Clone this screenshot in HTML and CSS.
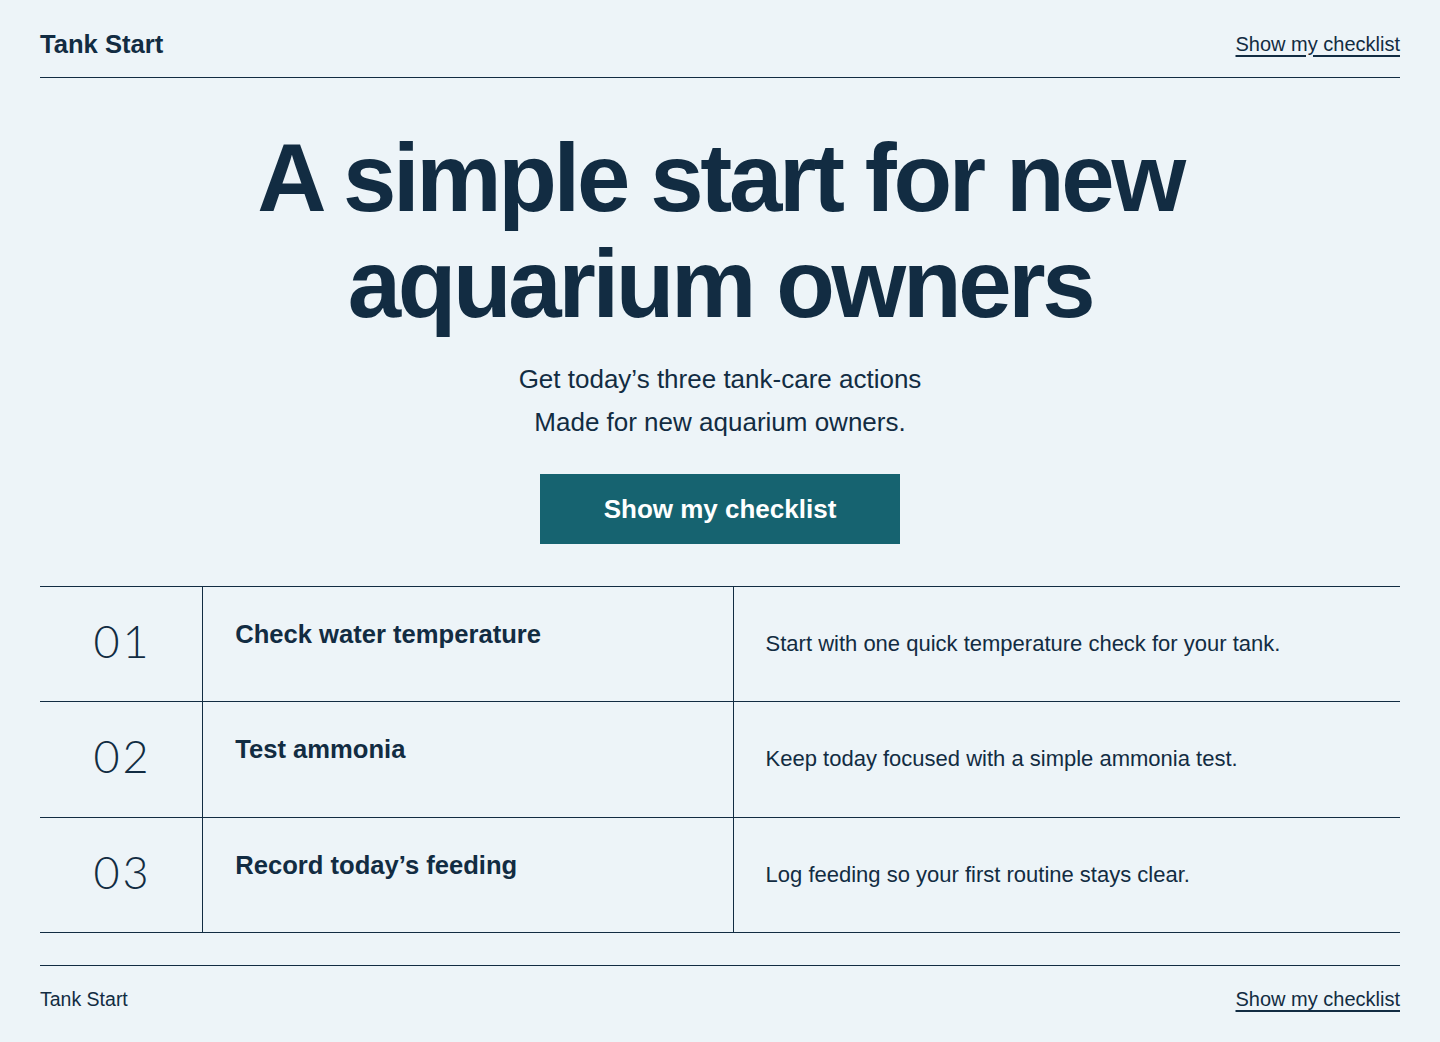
FILE: index.html
```html
<!DOCTYPE html>
<html lang="en">
  <head>
    <meta charset="UTF-8" />
    <meta name="viewport" content="width=device-width, initial-scale=1.0" />
    <title>Tank Start</title>
    <link rel="stylesheet" href="styles.css">
  </head>
  <body>
    <header class="topbar">
      <a class="brand" href="#">Tank Start</a>
      <a class="textlink" href="#checklist">Show my checklist</a>
    </header>
    <main>
      <section class="hero">
        <h1>A simple start for new aquarium owners</h1>
        <p class="lede">Get today’s three tank-care actions</p>
        <p class="lede">Made for new aquarium owners.</p>
        <a class="cta" href="#checklist">Show my checklist</a>
      </section>
      <ol class="steps" id="checklist">
        <li class="step">
          <span class="step-num">01</span>
          <h3 class="step-title">Check water temperature</h3>
          <p class="step-text">Start with one quick temperature check for your tank.</p>
        </li>
        <li class="step">
          <span class="step-num">02</span>
          <h3 class="step-title">Test ammonia</h3>
          <p class="step-text">Keep today focused with a simple ammonia test.</p>
        </li>
        <li class="step">
          <span class="step-num">03</span>
          <h3 class="step-title">Record today’s feeding</h3>
          <p class="step-text">Log feeding so your first routine stays clear.</p>
        </li>
      </ol>
    </main>
    <footer class="footbar">
      <span class="foot-brand">Tank Start</span>
      <a class="textlink" href="#checklist">Show my checklist</a>
    </footer>
  </body>
</html>
```

FILE: styles.css
```css
* {
  margin: 0;
  padding: 0;
  box-sizing: border-box;
}
body {
  background-color: #edf4f8;
  color: #122c42;
  font-family: "Liberation Sans", Arial, Helvetica, sans-serif;
  padding: 0 40px;
}
a {
  color: inherit;
  text-decoration: none;
}

/* top bar : brand left, link right */
.topbar {
  display: flex;
  justify-content: space-between;
  align-items: center;
  padding: 29px 0 18px;
  border-bottom: 1px solid #122c42;
}
.brand {
  font-size: 25.6px;
  line-height: 30px;
  font-weight: bold;
}
.textlink {
  font-size: 20px;
  text-decoration: underline;
  text-decoration-thickness: 2px;
  text-underline-offset: 4px;
}

/* hero */
.hero {
  text-align: center;
  padding-top: 47px;
}
.hero h1 {
  max-width: 1000px;
  margin: 0 auto;
  font-size: 96px;
  line-height: 1.1;
  letter-spacing: -0.035em;
  font-weight: bold;
}
.lede {
  font-size: 26px;
  line-height: 43px;
}
.hero h1 + .lede {
  margin-top: 22px;
}
.cta {
  display: inline-block;
  margin-top: 30px;
  padding: 20px 64px;
  background-color: #166370;
  color: #fff;
  font-size: 26px;
  line-height: 30px;
  font-weight: bold;
}

/* checklist rows : number | title | text */
.steps {
  list-style: none;
  margin-top: 42px;
  border-top: 1px solid #122c42;
}
.step {
  display: grid;
  grid-template-columns: 12% 39% 49%;
  height: 115.2px;
  border-bottom: 1px solid #122c42;
}
.step > * {
  border-right: 1px solid #122c42;
}
.step > *:last-child {
  border-right: none;
}
.step-num {
  display: flex;
  justify-content: center;
  padding-top: 32px;
  font-family: Lato, "Liberation Sans", sans-serif;
  font-size: 45px;
  line-height: 1;
  font-weight: 300;
  font-variant-numeric: tabular-nums;
  letter-spacing: 3px;
  text-indent: 3px;
}
.step-title {
  padding: 31px 32px 0;
  font-size: 25.6px;
  line-height: 33px;
}
.step-text {
  display: flex;
  align-items: center;
  padding: 0 32px;
  font-size: 22px;
}

/* footer */
.footbar {
  display: flex;
  justify-content: space-between;
  align-items: baseline;
  margin-top: 32px;
  padding: 22px 0;
  border-top: 1px solid #122c42;
}
.foot-brand {
  font-size: 19.5px;
}
```
